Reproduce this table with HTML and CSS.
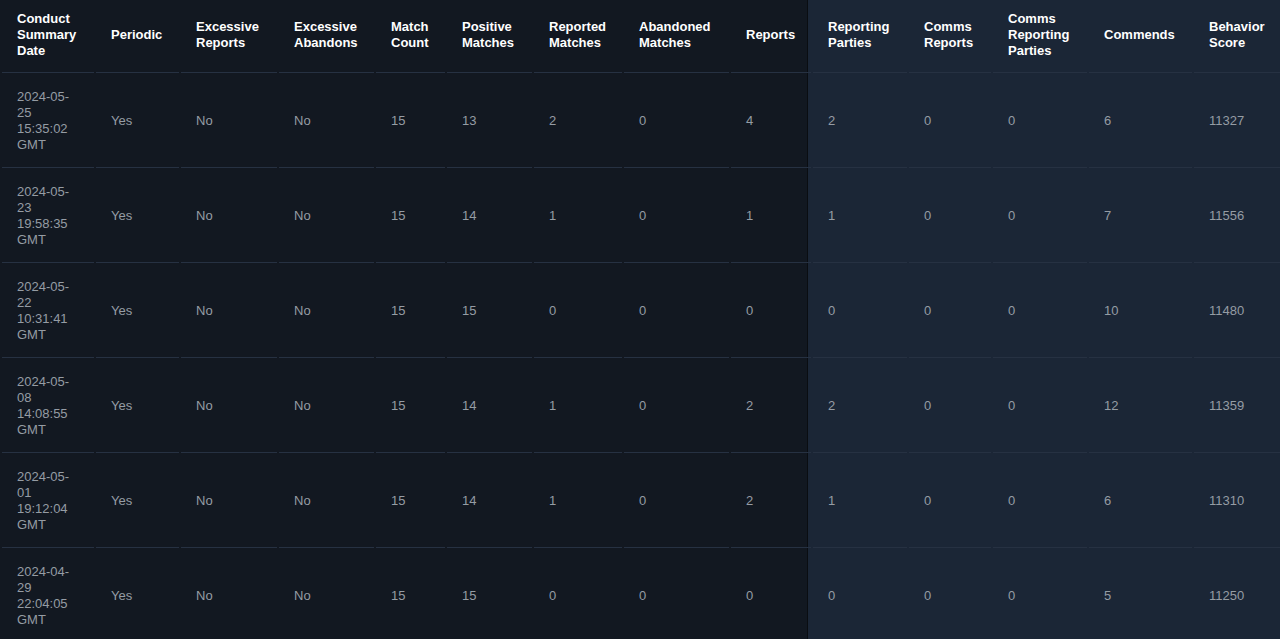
FILE: index.html
```html
<!DOCTYPE html>
<html lang="en">
<head>
<meta charset="utf-8">
<title>Conduct Summary</title>
<link rel="stylesheet" href="styles.css">
</head>
<body>
<div class="panel">
  <table class="conduct">
    <thead>
      <tr>
        <th class="c1">Conduct Summary Date</th>
        <th class="c2">Periodic</th>
        <th class="c3">Excessive Reports</th>
        <th class="c4">Excessive Abandons</th>
        <th class="c5">Match Count</th>
        <th class="c6">Positive Matches</th>
        <th class="c7">Reported Matches</th>
        <th class="c8">Abandoned Matches</th>
        <th class="c9">Reports</th>
        <th class="c10">Reporting Parties</th>
        <th class="c11">Comms Reports</th>
        <th class="c12">Comms Reporting Parties</th>
        <th class="c13">Commends</th>
        <th class="c14">Behavior Score</th>
      </tr>
    </thead>
    <tbody>
      <tr><td class="date">2024-05-25 15:35:02 GMT</td><td>Yes</td><td>No</td><td>No</td><td>15</td><td>13</td><td>2</td><td>0</td><td>4</td><td>2</td><td>0</td><td>0</td><td>6</td><td>11327</td></tr>
      <tr><td class="date">2024-05-23 19:58:35 GMT</td><td>Yes</td><td>No</td><td>No</td><td>15</td><td>14</td><td>1</td><td>0</td><td>1</td><td>1</td><td>0</td><td>0</td><td>7</td><td>11556</td></tr>
      <tr><td class="date">2024-05-22 10:31:41 GMT</td><td>Yes</td><td>No</td><td>No</td><td>15</td><td>15</td><td>0</td><td>0</td><td>0</td><td>0</td><td>0</td><td>0</td><td>10</td><td>11480</td></tr>
      <tr><td class="date">2024-05-08 14:08:55 GMT</td><td>Yes</td><td>No</td><td>No</td><td>15</td><td>14</td><td>1</td><td>0</td><td>2</td><td>2</td><td>0</td><td>0</td><td>12</td><td>11359</td></tr>
      <tr><td class="date">2024-05-01 19:12:04 GMT</td><td>Yes</td><td>No</td><td>No</td><td>15</td><td>14</td><td>1</td><td>0</td><td>2</td><td>1</td><td>0</td><td>0</td><td>6</td><td>11310</td></tr>
      <tr><td class="date">2024-04-29 22:04:05 GMT</td><td>Yes</td><td>No</td><td>No</td><td>15</td><td>15</td><td>0</td><td>0</td><td>0</td><td>0</td><td>0</td><td>0</td><td>5</td><td>11250</td></tr>
    </tbody>
  </table>
</div>
</body>
</html>
```

FILE: styles.css
```css
html, body {
  margin: 0;
  padding: 0;
}
body {
  background: #1b2636;
  overflow: hidden;
  font-family: "Liberation Sans", Arial, sans-serif;
  font-size: 13px;
  line-height: 16px;
}
.panel {
  width: 807px;
  min-height: 100vh;
  background: #121821;
  border-right: 1px solid #0a0d11;
}
.conduct {
  border-collapse: separate;
  border-spacing: 2px;
  table-layout: fixed;
  width: 1296px;
}
.conduct th,
.conduct td {
  box-sizing: border-box;
  text-align: left;
  vertical-align: middle;
  border-bottom: 1px solid #263142;
}
.conduct th {
  color: #ffffff;
  font-weight: bold;
  padding: 9px 6px 13px 15px;
}
.conduct td {
  color: #959ca4;
  padding: 14px 6px 14px 15px;
}
.conduct td.date {
  padding-right: 16px;
}
.c1 { width: 92px; }
.c2 { width: 83px; }
.c3 { width: 96px; }
.c4 { width: 95px; }
.c5 { width: 69px; }
.c6 { width: 85px; }
.c7 { width: 88px; }
.c8 { width: 105px; }
.c9 { width: 80px; }
.c10 { width: 94px; }
.c11 { width: 82px; }
.c12 { width: 94px; }
.c13 { width: 103px; }
.c14 { width: 100px; }
```
